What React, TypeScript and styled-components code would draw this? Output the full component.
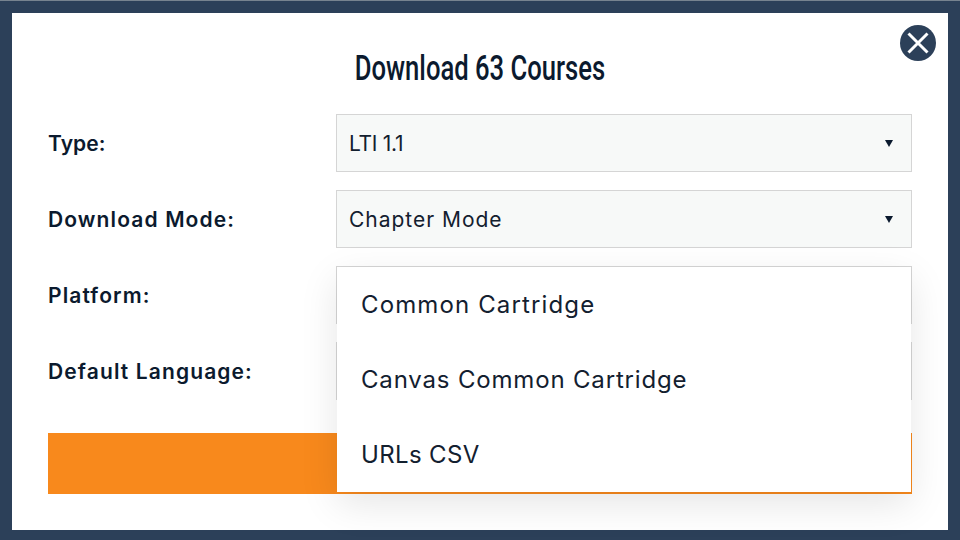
import styled, { createGlobalStyle } from "styled-components";

type FieldProps = {
  label: string;
  value?: string;
  open?: boolean;
  labelTracking?: number;
  valueTracking?: number;
};

const platforms = [
  { name: "Common Cartridge", tracking: 1.13 },
  { name: "Canvas Common Cartridge", tracking: 0.83 },
  { name: "URLs CSV", tracking: 0.35 },
];

const GlobalStyle = createGlobalStyle`
  html, body {
    margin: 0;
    padding: 0;
    height: 100%;
    background: #2c4059;
    font-family: "Inter", "Liberation Sans", sans-serif;
    color: #0e1b2d;
  }
`;

const Field = ({ label, value, open, labelTracking = 1.12, valueTracking = 0.98 }: FieldProps) => {
  return (
    <Row>
      <Label $tracking={labelTracking}>{label}</Label>
      <Select>
        {value && <Value $tracking={valueTracking}>{value}</Value>}
        {!open && <Caret />}
        {open && (
          <Menu>
            {platforms.map((item) => (
              <Option key={item.name} $tracking={item.tracking}>
                {item.name}
              </Option>
            ))}
          </Menu>
        )}
      </Select>
    </Row>
  );
};

const App = () => {
  return (
    <Page>
      <GlobalStyle />
      <Modal>
        <Close aria-label="Close">
          <svg width="36" height="36" viewBox="0 0 36 36">
            <path d="M8.5 8.5 L27.5 27.5 M27.5 8.5 L8.5 27.5" stroke="#fff" strokeWidth="3" fill="none" />
          </svg>
        </Close>
        <Title>
          <TitleText>Download 63 Courses</TitleText>
        </Title>
        <Form>
          <Field label="Type:" value="LTI 1.1" labelTracking={0.1} valueTracking={-0.3} />
          <Field label="Download Mode:" value="Chapter Mode" />
          <Field label="Platform:" open />
          <Field label="Default Language:" />
          <Submit />
        </Form>
      </Modal>
    </Page>
  );
};

const Page = styled.div`
  box-sizing: border-box;
  width: 960px;
  height: 540px;
  padding: 12px 12px 10px;
  border-top: 1px solid #77838f;
  overflow: hidden;
`;

const Modal = styled.div`
  position: relative;
  box-sizing: border-box;
  height: 517px;
  padding: 0 36px;
  background: #fff;
`;

const Close = styled.button`
  position: absolute;
  top: 12px;
  right: 12px;
  width: 36px;
  height: 36px;
  padding: 0;
  border: 0;
  border-radius: 50%;
  background: #2c4059;
  display: flex;
`;

const Title = styled.h2`
  margin: 0;
  height: 101px;
  padding-top: 33px;
  box-sizing: border-box;
  text-align: center;
  font-family: "Roboto", "Liberation Sans", sans-serif;
  font-size: 35px;
  line-height: 46px;
  font-weight: 500;
  color: #0b1a2e;
`;

/* no condensed face is installed, so the heading is squeezed to its width */
const TitleText = styled.span`
  display: inline-block;
  white-space: nowrap;
  transform: scaleX(0.732);
`;

const Form = styled.div`
  display: flex;
  flex-direction: column;
  gap: 18px;
`;

const Row = styled.div`
  display: grid;
  grid-template-columns: 288px 576px;
  align-items: center;
`;

const Label = styled.label<{ $tracking: number }>`
  padding-top: 1px;
  font-size: 21px;
  font-weight: 600;
  letter-spacing: ${(props) => props.$tracking}px;
  color: #0b1a2e;
`;

const Select = styled.div`
  position: relative;
  box-sizing: border-box;
  height: 58px;
  padding: 0 18px 0 12px;
  display: flex;
  align-items: center;
  justify-content: space-between;
  background: #f7f9f8;
  border: 1px solid #d5d5d5;
`;

const Value = styled.span<{ $tracking: number }>`
  padding-top: 1px;
  font-size: 21px;
  letter-spacing: ${(props) => props.$tracking}px;
  color: #13202f;
`;

const Caret = styled.span`
  margin-left: auto;
  width: 0;
  height: 0;
  border-left: 4px solid transparent;
  border-right: 4px solid transparent;
  border-top: 7px solid #0b1a2e;
`;

const Menu = styled.ul`
  position: absolute;
  top: 0;
  left: 0;
  z-index: 2;
  width: 574px;
  margin: 0;
  padding: 0;
  list-style: none;
  background: #fff;
  box-shadow: 0 12px 36px rgba(0, 0, 0, 0.1);
`;

const Option = styled.li<{ $tracking: number }>`
  box-sizing: border-box;
  height: 75px;
  padding-left: 24px;
  display: flex;
  align-items: center;
  font-size: 24px;
  letter-spacing: ${(props) => props.$tracking}px;
  color: #13202f;
`;

const Submit = styled.button`
  height: 61px;
  margin-top: 15px;
  border: 0;
  background: #f8891c;
`;

export default App;
